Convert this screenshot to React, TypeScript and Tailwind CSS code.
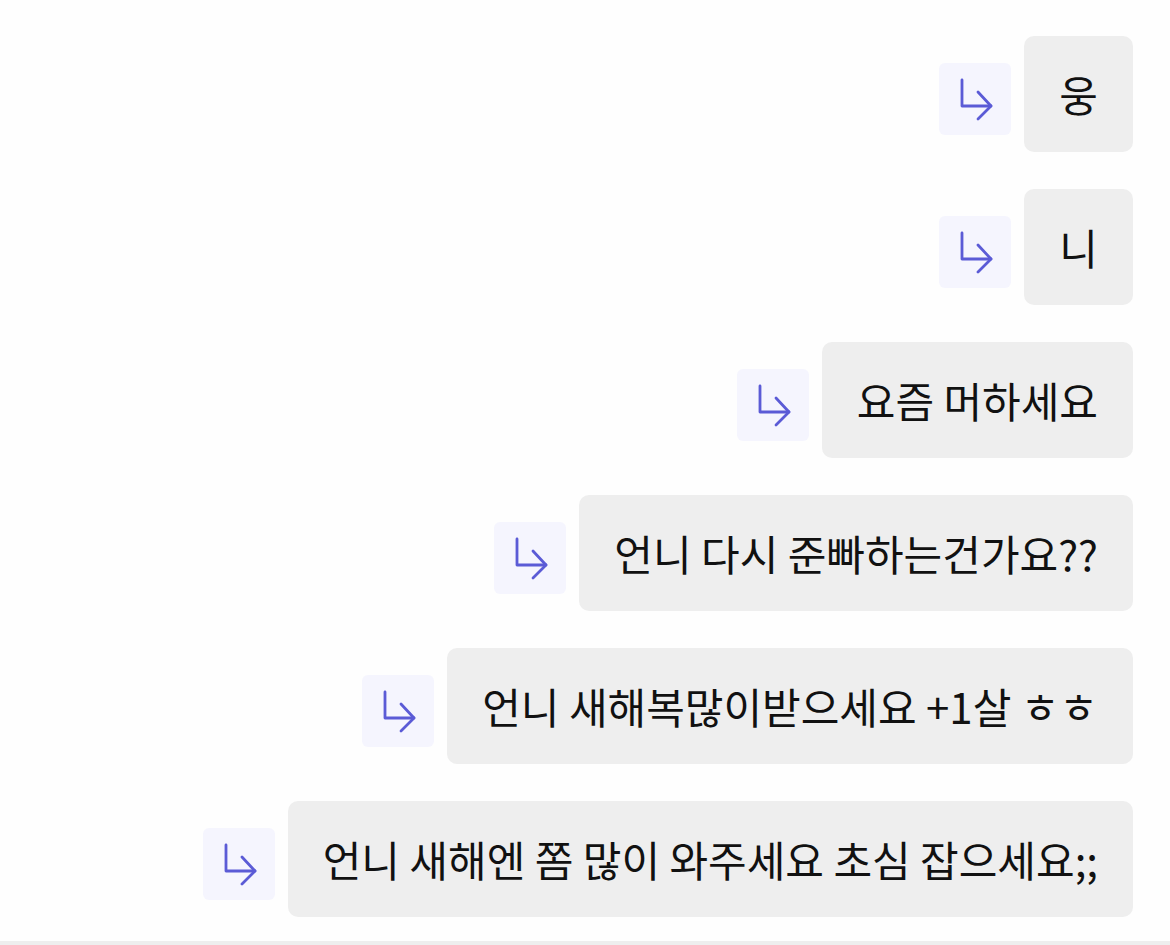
const messages = [
  '웅',
  '니',
  '요즘 머하세요',
  '언니 다시 준빠하는건가요??',
  '언니 새해복많이받으세요 +1살 ㅎㅎ',
  '언니 새해엔 쫌 많이 와주세요 초심 잡으세요;;',
];

const ReplyIcon = () => (
  <svg width="36" height="44" viewBox="0 0 36 44" fill="none" stroke="#5b5bd6" strokeWidth="2.8" strokeLinecap="round" strokeLinejoin="round">
    <path d="M5 3v26h29" />
    <path d="M21 15l13 14-13 13" />
  </svg>
);

const App = () => {
  return (
    <div className="w-[1170px] h-[945px] bg-[#fefefe] flex flex-col overflow-hidden" style={{ fontFamily: '"Noto Sans CJK KR", "Noto Sans", sans-serif' }}>
      <div className="flex flex-col items-end gap-[37px] pt-[36px] pr-[37px] pb-[24px]">
        {messages.map((m, i) => (
          <div key={i} className="flex items-start gap-[13px]">
            <button className="mt-[27px] w-[72px] h-[72px] rounded-[6px] bg-[#f5f5fe] flex items-center justify-center">
              <ReplyIcon />
            </button>
            <div className="h-[116px] px-[35px] rounded-[10px] bg-[#eeeeee] flex items-center text-[42px] leading-[56px] text-[#111111] whitespace-nowrap">
              {m}
            </div>
          </div>
        ))}
      </div>
      <div className="border-t-[4px] border-[#eeeeee] flex-1" />
    </div>
  );
};

export default App;
